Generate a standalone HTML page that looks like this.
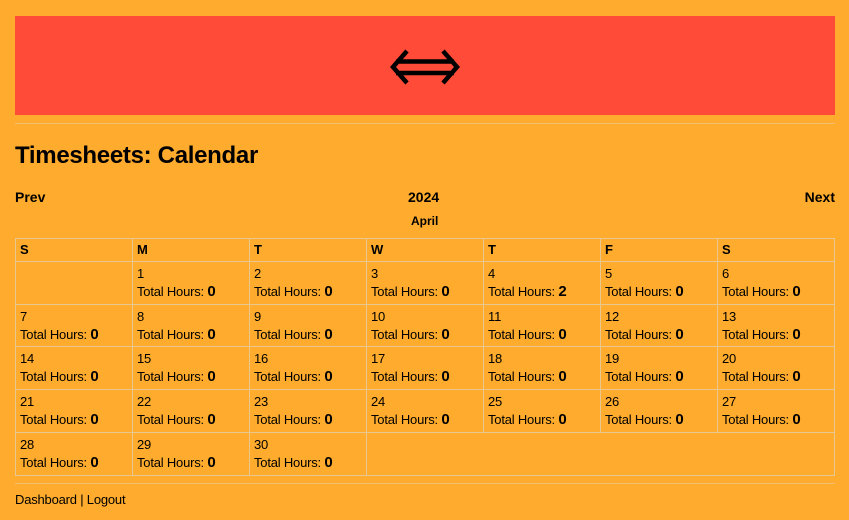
<!DOCTYPE html>
<html><head><style>
body{margin:0;background:#ffab2d;font-family:"Liberation Sans",sans-serif;color:#000;width:849px;height:520px;overflow:hidden;position:relative}
.hero{position:absolute;left:15px;top:16px;width:820px;height:99px;background:#ff4b37}
hr{position:absolute;left:15px;width:820px;border:0;border-top:1px solid #f0c070;margin:0}
h1{position:absolute;left:15px;top:142px;margin:0;font-size:24px;font-weight:bold;letter-spacing:-0.3px}
.nav{position:absolute;top:189px;font-size:14px;font-weight:bold}
table{position:absolute;left:15px;top:238px;width:820px;border-collapse:collapse;table-layout:fixed;font-size:13px;letter-spacing:-0.2px}
td,th{border:1px solid #e8c890;padding:0 0 0 4px;text-align:left;vertical-align:top;line-height:18px}
th{height:22px;line-height:22px;font-size:13px}
td{height:43px;padding-top:3px;box-sizing:border-box}
tr.s td{height:42px}
b.n{font-size:15px}
.foot{position:absolute;left:15px;top:492px;font-size:13px;letter-spacing:-0.2px}
</style></head><body>
<div class="hero"><svg width="820" height="99" viewBox="0 0 820 99"><g fill="none" stroke="#000" stroke-width="4.5" stroke-linejoin="miter"><path d="M392 35 L378 51 L392 67 M428 35 L442 51 L428 67 M381 45.5 H439 M381 57 H439"/></g></svg></div>
<hr style="top:123px">
<h1>Timesheets: Calendar</h1>
<div class="nav" style="left:15px">Prev</div>
<div class="nav" style="left:408px">2024</div>
<div class="nav" style="right:14px">Next</div>
<div class="nav" style="left:411px;top:214px;font-size:12px">April</div>
<table>
<tr><th>S</th><th>M</th><th>T</th><th>W</th><th>T</th><th>F</th><th>S</th></tr>
<tr><td></td><td>1<br>Total Hours: <b class="n">0</b></td><td>2<br>Total Hours: <b class="n">0</b></td><td>3<br>Total Hours: <b class="n">0</b></td><td>4<br>Total Hours: <b class="n">2</b></td><td>5<br>Total Hours: <b class="n">0</b></td><td>6<br>Total Hours: <b class="n">0</b></td></tr>
<tr class="s"><td>7<br>Total Hours: <b class="n">0</b></td><td>8<br>Total Hours: <b class="n">0</b></td><td>9<br>Total Hours: <b class="n">0</b></td><td>10<br>Total Hours: <b class="n">0</b></td><td>11<br>Total Hours: <b class="n">0</b></td><td>12<br>Total Hours: <b class="n">0</b></td><td>13<br>Total Hours: <b class="n">0</b></td></tr>
<tr><td>14<br>Total Hours: <b class="n">0</b></td><td>15<br>Total Hours: <b class="n">0</b></td><td>16<br>Total Hours: <b class="n">0</b></td><td>17<br>Total Hours: <b class="n">0</b></td><td>18<br>Total Hours: <b class="n">0</b></td><td>19<br>Total Hours: <b class="n">0</b></td><td>20<br>Total Hours: <b class="n">0</b></td></tr>
<tr><td>21<br>Total Hours: <b class="n">0</b></td><td>22<br>Total Hours: <b class="n">0</b></td><td>23<br>Total Hours: <b class="n">0</b></td><td>24<br>Total Hours: <b class="n">0</b></td><td>25<br>Total Hours: <b class="n">0</b></td><td>26<br>Total Hours: <b class="n">0</b></td><td>27<br>Total Hours: <b class="n">0</b></td></tr>
<tr><td>28<br>Total Hours: <b class="n">0</b></td><td>29<br>Total Hours: <b class="n">0</b></td><td>30<br>Total Hours: <b class="n">0</b></td><td colspan="4"></td></tr>
</table>
<hr style="top:483px">
<div class="foot">Dashboard | Logout</div>
</body></html>
